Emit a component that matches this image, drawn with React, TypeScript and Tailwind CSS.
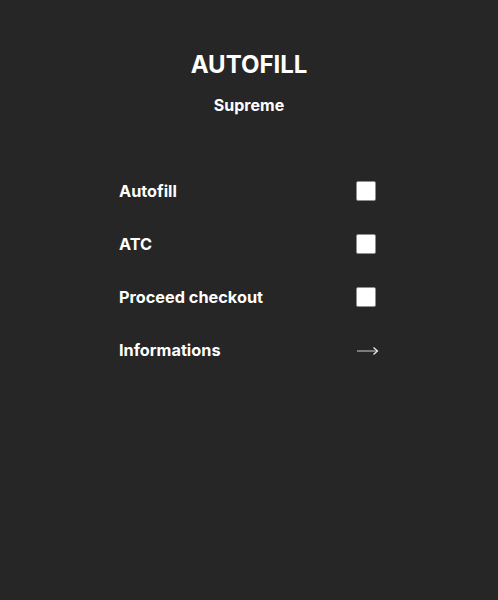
import React from "react";

const ROWS = [
  { label: "Autofill", kind: "check" },
  { label: "ATC", kind: "check" },
  { label: "Proceed checkout", kind: "check" },
  { label: "Informations", kind: "arrow" },
] as const;

export default function App() {
  return (
    <div
      className="min-h-[600px] w-full bg-[#262626] text-white flex flex-col items-center"
      style={{ fontFamily: "Inter, 'Noto Sans', sans-serif" }}
    >
      <h1 className="mt-[50px] text-[24px] leading-[30px] font-bold">AUTOFILL</h1>
      <h2 className="mt-[15px] text-[16px] leading-[20px] font-bold">Supreme</h2>

      <div className="mt-[66px] w-[260px] flex flex-col gap-[33px]">
        {ROWS.map((r) => (
          <div key={r.label} className="flex items-center justify-between h-[20px]">
            <span className="text-[16.3px] font-bold leading-[20px]">{r.label}</span>
            {r.kind === "check" ? (
              <span className="mr-[3px] w-[20px] h-[20px] bg-white border border-[#8f8f8f] rounded-[2px]" />
            ) : (
              <svg width="22" height="10" viewBox="0 0 22 10" className="translate-y-[1px]">
                <line x1="0" y1="5" x2="20" y2="5" stroke="#b5b5b5" strokeWidth="1.2" />
                <path d="M16.5 1.5 L20.5 5 L16.5 8.5" fill="none" stroke="#f2f2f2" strokeWidth="1.2" />
              </svg>
            )}
          </div>
        ))}
      </div>
    </div>
  );
}
